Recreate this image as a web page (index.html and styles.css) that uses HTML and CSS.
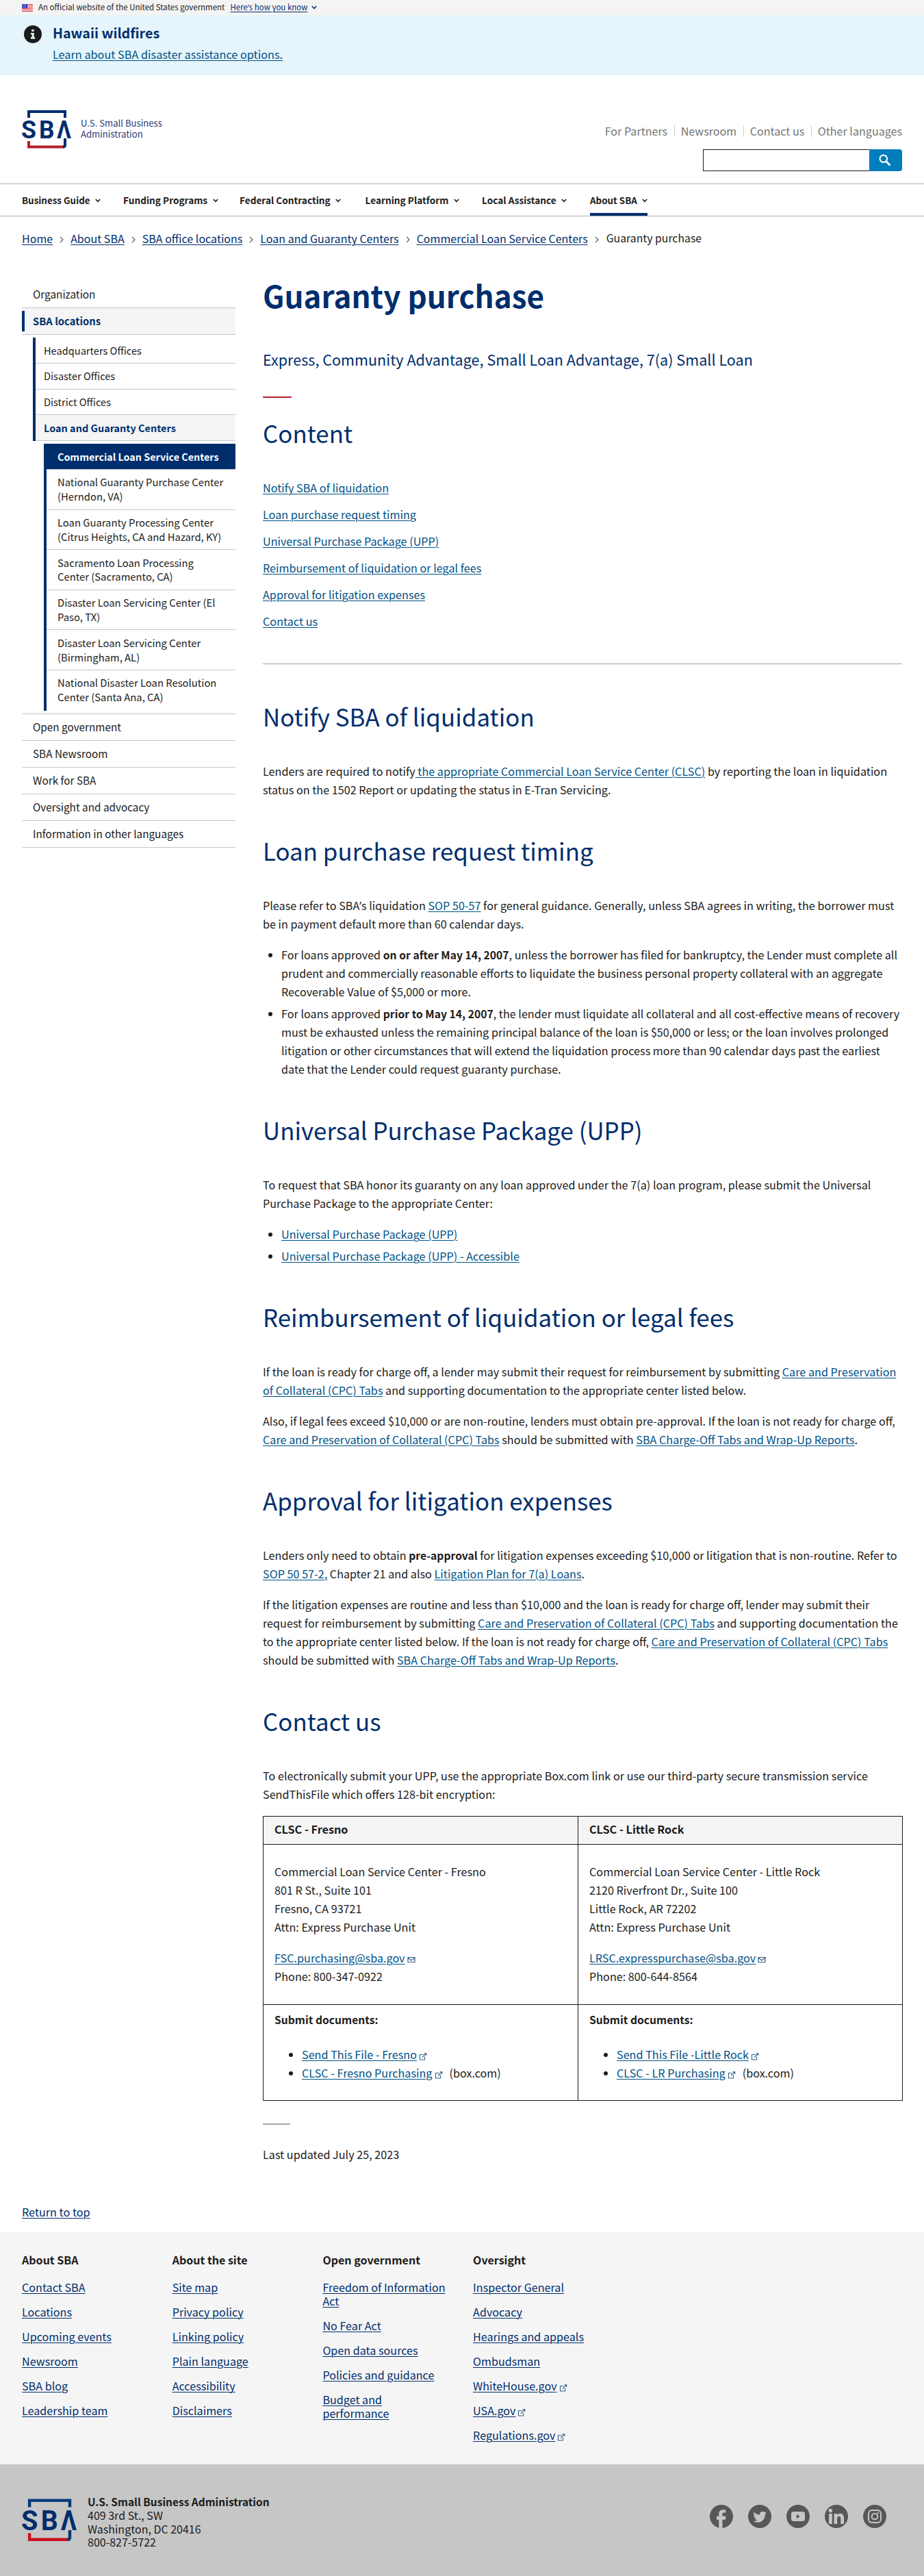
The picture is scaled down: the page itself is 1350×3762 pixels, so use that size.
FILE: index.html
```html
<!DOCTYPE html>
<html lang="en">
<head>
<meta charset="utf-8">
<title>Guaranty purchase</title>
<link rel="stylesheet" href="styles.css">
</head>
<body>
<svg class="defs" aria-hidden="true">
  <symbol id="chev" viewBox="0 0 8 6"><path d="M.8 1L4 4.300 7.200 1" fill="none" stroke="currentColor" stroke-width="1.600"/></symbol>
  <symbol id="sep" viewBox="0 0 6 10"><path d="M1 1l4 4-4 4" fill="none" stroke="#71767a" stroke-width="1.500"/></symbol>
  <symbol id="ext" viewBox="0 0 12 12"><path d="M6.500 3.500H1.500v7.500h7V6.500M5 7.500l5.500-5.500M7.500 1.700h3.300V5" fill="none" stroke="currentColor" stroke-width="1.100"/></symbol>
  <symbol id="mail" viewBox="0 0 12 10"><path d="M1 1.500h10v7H1zM1 2l5 4 5-4" fill="none" stroke="currentColor" stroke-width="1.200"/></symbol>
</svg>

<div class="gov">
  <svg class="flag" viewBox="0 0 16 11"><path fill="#fff" d="M0 0h16v11H0z"/><path stroke="#d8303e" stroke-width="1" d="M0 .5h16M0 2.500h16M0 4.500h16M0 6.500h16M0 8.500h16M0 10.500h16"/><path fill="#2b33b5" d="M0 0h8v6H0z"/><path stroke="#fff" stroke-width=".7" stroke-dasharray="1 1" d="M1 1.500h6M1 3.200h6M1 4.800h6"/></svg>
  <span class="gov-text">An official website of the United States government</span>
  <a href="#">Here<span class="apos">’</span>s how you know</a><svg class="chev"><use href="#chev"/></svg>
</div>
<section class="alert">
  <svg class="info" viewBox="0 0 26 26"><circle cx="13" cy="13" r="13" fill="#1b1b1b"/><path fill="#e7f6f8" d="M11.200 6h3.400v3h-3.400zM10 11h4.700v6.300h1.500v2.500H10v-2.500h1.600v-4H10z"/></svg>
  <div><h3>Hawaii wildfires</h3><a href="#">Learn about SBA disaster assistance options.</a></div>
</section>

<header class="head">
  <div class="brand">
    <svg class="logo" viewBox="0 0 72 56">
      <path d="M10 11V2h53v9" fill="none" stroke="#002e6d" stroke-width="4"/>
      <path d="M10 45v8.500h51" fill="none" stroke="#b5202a" stroke-width="4"/>
      <path d="M63 41v9.500q0 3-3 3" fill="none" stroke="#002e6d" stroke-width="4"/>
      <g class="letters"><text x="-1" y="41.300" textLength="22" lengthAdjust="spacingAndGlyphs">S</text><text x="25" y="41.300" textLength="22.500" lengthAdjust="spacingAndGlyphs">B</text><text x="51" y="41.300" textLength="21" lengthAdjust="spacingAndGlyphs">Λ</text></g>
    </svg>
    <span>U.S. Small Business<br>Administration</span>
  </div>
  <div class="tools">
    <ul class="util"><li>For Partners</li><li>Newsroom</li><li>Contact us</li><li>Other languages</li></ul>
    <form class="search"><input type="text" aria-label="Search"><button type="button" aria-label="Search"><svg viewBox="0 0 18 18"><circle cx="6.800" cy="6.800" r="5.200" fill="none" stroke="#fff" stroke-width="2.200"/><path d="M10.500 10.500l6 6" stroke="#fff" stroke-width="2.600"/></svg></button></form>
  </div>
</header>
<nav class="nav">
  <span>Business Guide<svg class="chev"><use href="#chev"/></svg></span>
  <span>Funding Programs<svg class="chev"><use href="#chev"/></svg></span>
  <span>Federal Contracting<svg class="chev"><use href="#chev"/></svg></span>
  <span>Learning Platform<svg class="chev"><use href="#chev"/></svg></span>
  <span>Local Assistance<svg class="chev"><use href="#chev"/></svg></span>
  <span class="on">About SBA<svg class="chev"><use href="#chev"/></svg></span>
</nav>
<div class="crumbs">
  <a href="#">Home</a><svg><use href="#sep"/></svg><a href="#">About SBA</a><svg><use href="#sep"/></svg><a href="#">SBA office locations</a><svg><use href="#sep"/></svg><a href="#">Loan and Guaranty Centers</a><svg><use href="#sep"/></svg><a href="#">Commercial Loan Service Centers</a><svg><use href="#sep"/></svg><span>Guaranty purchase</span>
</div>

<div class="page">
  <aside>
    <ul class="side">
      <li>Organization</li>
      <li class="cur">SBA locations</li>
      <li class="sub">
        <ul class="l2"><li>Headquarters Offices</li><li>Disaster Offices</li><li>District Offices</li><li class="cur2">Loan and Guaranty Centers</li></ul>
        <ul class="l3">
          <li class="active">Commercial Loan Service Centers</li>
          <li>National Guaranty Purchase Center<br>(Herndon, VA)</li>
          <li>Loan Guaranty Processing Center<br>(Citrus Heights, CA and Hazard, KY)</li>
          <li>Sacramento Loan Processing<br>Center (Sacramento, CA)</li>
          <li>Disaster Loan Servicing Center (El<br>Paso, TX)</li>
          <li>Disaster Loan Servicing Center<br>(Birmingham, AL)</li>
          <li>National Disaster Loan Resolution<br>Center (Santa Ana, CA)</li>
        </ul>
      </li>
      <li>Open government</li><li>SBA Newsroom</li><li>Work for SBA</li><li>Oversight and advocacy</li><li>Information in other languages</li>
    </ul>
  </aside>
  <main>
    <h1>Guaranty purchase</h1>
    <p class="lead">Express, Community Advantage, Small Loan Advantage, 7(a) Small Loan</p>
    <div class="rule"></div>
    <h2 class="toc-title">Content</h2>
    <ul class="toc">
      <li><a href="#">Notify SBA of liquidation</a></li><li><a href="#">Loan purchase request timing</a></li><li><a href="#">Universal Purchase Package (UPP)</a></li><li><a href="#">Reimbursement of liquidation or legal fees</a></li><li><a href="#">Approval for litigation expenses</a></li><li><a href="#">Contact us</a></li>
    </ul>
    <h2>Notify SBA of liquidation</h2>
    <p>Lenders are required to notify<a href="#"> the appropriate Commercial Loan Service Center (CLSC)</a> by reporting the loan in liquidation<br>status on the 1502 Report or updating the status in E-Tran Servicing.</p>
    <h2>Loan purchase request timing</h2>
    <p>Please refer to SBA<span class="apos">’</span>s liquidation <a href="#">SOP 50-57</a> for general guidance. Generally, unless SBA agrees in writing, the borrower must<br>be in payment default more than 60 calendar days.</p>
    <ul class="list">
      <li>For loans approved <strong>on or after May 14, 2007</strong>, unless the borrower has filed for bankruptcy, the Lender must complete all<br>prudent and commercially reasonable efforts to liquidate the business personal property collateral with an aggregate<br>Recoverable Value of $5,000 or more.</li>
      <li>For loans approved <strong>prior to May 14, 2007</strong>, the lender must liquidate all collateral and all cost-effective means of recovery<br>must be exhausted unless the remaining principal balance of the loan is $50,000 or less; or the loan involves prolonged<br>litigation or other circumstances that will extend the liquidation process more than 90 calendar days past the earliest<br>date that the Lender could request guaranty purchase.</li>
    </ul>
    <h2>Universal Purchase Package (UPP)</h2>
    <p>To request that SBA honor its guaranty on any loan approved under the 7(a) loan program, please submit the Universal<br>Purchase Package to the appropriate Center:</p>
    <ul class="list"><li><a href="#">Universal Purchase Package (UPP)</a></li><li><a href="#">Universal Purchase Package (UPP) - Accessible</a></li></ul>
    <h2>Reimbursement of liquidation or legal fees</h2>
    <p>If the loan is ready for charge off, a lender may submit their request for reimbursement by submitting <a href="#">Care and Preservation<br>of Collateral (CPC) Tabs</a> and supporting documentation to the appropriate center listed below.</p>
    <p>Also, if legal fees exceed $10,000 or are non-routine, lenders must obtain pre-approval. If the loan is not ready for charge off,<br><a href="#">Care and Preservation of Collateral (CPC) Tabs</a> should be submitted with <a href="#">SBA Charge-Off Tabs and Wrap-Up Reports</a>.</p>
    <h2>Approval for litigation expenses</h2>
    <p>Lenders only need to obtain <strong>pre-approval</strong> for litigation expenses exceeding $10,000 or litigation that is non-routine. Refer to<br><a href="#">SOP 50 57-2,</a> Chapter 21 and also <a href="#">Litigation Plan for 7(a) Loans</a>.</p>
    <p>If the litigation expenses are routine and less than $10,000 and the loan is ready for charge off, lender may submit their<br>request for reimbursement by submitting <a href="#">Care and Preservation of Collateral (CPC) Tabs</a> and supporting documentation the<br>to the appropriate center listed below. If the loan is not ready for charge off, <a href="#">Care and Preservation of Collateral (CPC) Tabs</a><br>should be submitted with <a href="#">SBA Charge-Off Tabs and Wrap-Up Reports</a>.</p>
    <h2>Contact us</h2>
    <p>To electronically submit your UPP, use the appropriate Box.com link or use our third-party secure transmission service<br>SendThisFile which offers 128-bit encryption:</p>
    <table>
      <colgroup><col class="c1"><col class="c2"></colgroup>
      <tr><th>CLSC - Fresno</th><th>CLSC - Little Rock</th></tr>
      <tr class="addr">
        <td><p>Commercial Loan Service Center - Fresno<br>801 R St., Suite 101<br>Fresno, CA 93721<br>Attn: Express Purchase Unit</p><p><a href="#">FSC.purchasing@sba.gov</a><svg class="ico mail"><use href="#mail"/></svg><br>Phone: 800-347-0922</p></td>
        <td><p>Commercial Loan Service Center - Little Rock<br>2120 Riverfront Dr., Suite 100<br>Little Rock, AR 72202<br>Attn: Express Purchase Unit</p><p><a href="#">LRSC.expresspurchase@sba.gov</a><svg class="ico mail"><use href="#mail"/></svg><br>Phone: 800-644-8564</p></td>
      </tr>
      <tr class="docs">
        <td><strong>Submit documents:</strong><ul><li><a href="#">Send This File - Fresno</a><svg class="ico"><use href="#ext"/></svg></li><li><a href="#">CLSC - Fresno Purchasing</a><svg class="ico"><use href="#ext"/></svg><span class="box">(box.com)</span></li></ul></td>
        <td><strong>Submit documents:</strong><ul><li><a href="#">Send This File -Little Rock</a><svg class="ico"><use href="#ext"/></svg></li><li><a href="#">CLSC - LR Purchasing</a><svg class="ico"><use href="#ext"/></svg><span class="box">(box.com)</span></li></ul></td>
      </tr>
    </table>
    <div class="short"></div>
    <p class="updated">Last updated July 25, 2023</p>
  </main>
</div>
<div class="top"><a href="#">Return to top</a></div>

<footer>
  <div class="links">
    <div><h4>About SBA</h4><a href="#">Contact SBA</a><a href="#">Locations</a><a href="#">Upcoming events</a><a href="#">Newsroom</a><a href="#">SBA blog</a><a href="#">Leadership team</a></div>
    <div><h4>About the site</h4><a href="#">Site map</a><a href="#">Privacy policy</a><a href="#">Linking policy</a><a href="#">Plain language</a><a href="#">Accessibility</a><a href="#">Disclaimers</a></div>
    <div><h4>Open government</h4><a href="#">Freedom of Information<br>Act</a><a href="#">No Fear Act</a><a href="#">Open data sources</a><a href="#">Policies and guidance</a><a href="#">Budget and<br>performance</a></div>
    <div><h4>Oversight</h4><a href="#">Inspector General</a><a href="#">Advocacy</a><a href="#">Hearings and appeals</a><a href="#">Ombudsman</a><a href="#">WhiteHouse.gov<svg class="ico"><use href="#ext"/></svg></a><a href="#">USA.gov<svg class="ico"><use href="#ext"/></svg></a><a href="#">Regulations.gov<svg class="ico"><use href="#ext"/></svg></a></div>
  </div>
  <div class="bottom">
    <svg class="logo2" viewBox="0 0 72 56">
      <path d="M10 11V2h53v9" fill="none" stroke="#003a78" stroke-width="4"/>
      <path d="M10 45v8.500h51" fill="none" stroke="#c8101c" stroke-width="4"/>
      <path d="M63 41v9.500q0 3-3 3" fill="none" stroke="#003a78" stroke-width="4"/>
      <g class="letters"><text x="-1" y="41.300" textLength="22" lengthAdjust="spacingAndGlyphs">S</text><text x="25" y="41.300" textLength="22.500" lengthAdjust="spacingAndGlyphs">B</text><text x="51" y="41.300" textLength="21" lengthAdjust="spacingAndGlyphs">Λ</text></g>
    </svg>
    <address><strong>U.S. Small Business Administration</strong><br>409 3rd St., SW<br>Washington, DC 20416<br>800-827-5722</address>
    <div class="social">
      <svg viewBox="0 0 34 34"><circle cx="17" cy="17" r="17"/><path class="g" d="M13.300 35V21.700H10v-5h3.300v-3.400c0-4 2.200-6 6-6 1.700 0 3 .1 4 .3v4h-2.500c-1.800 0-2.300.8-2.300 2.200v2.900h5l-.7 5h-4.300V35z"/></svg>
      <svg viewBox="0 0 34 34"><circle cx="17" cy="17" r="17"/><path class="g" d="M27 11.500c-.7.300-1.400.5-2.200.6.800-.5 1.400-1.200 1.700-2.100-.8.400-1.600.8-2.500.9a4.100 4.100 0 0 0-6.900 3.700c-3.400-.2-6.400-1.800-8.400-4.200-1.100 1.900-.5 4.200 1.300 5.400-.7 0-1.300-.2-1.900-.5 0 2 1.400 3.600 3.300 4-.6.200-1.200.2-1.800.1.500 1.600 2 2.700 3.800 2.800A8.200 8.200 0 0 1 7.500 24c9 5.200 17.700-1.300 17.500-10.500.8-.5 1.500-1.200 2-2z"/></svg>
      <svg viewBox="0 0 34 34"><circle cx="17" cy="17" r="17"/><rect class="g" x="7" y="10" width="20" height="14" rx="3.500"/><path d="M14.800 13.800l5 3.200-5 3.200z"/></svg>
      <svg viewBox="0 0 34 34"><circle cx="17" cy="17" r="17"/><circle class="g" cx="8.300" cy="8.600" r="2.800"/><path class="g" d="M6 13h4.800v15H6zM13.500 13H18v2.200c2.300-3.800 10-3.400 10 3.600V28h-4.700v-8c0-4.500-5.100-4-5.100 0v8h-4.700z"/></svg>
      <svg viewBox="0 0 34 34"><circle cx="17" cy="17" r="17"/><rect class="l" x="8" y="8" width="18" height="18" rx="5"/><circle class="l" cx="17" cy="17" r="4.300"/><circle class="g" cx="22" cy="12" r="1.200"/></svg>
    </div>
  </div>
</footer>
</body>
</html>
```
FILE: styles.css
```css
* { box-sizing: border-box; }
body { margin: 0; width: 1350px; background: #fff; color: #1b1b1b; font: 16.2px/27px "Noto Sans CJK SC", sans-serif; white-space: nowrap; }
ul, h1, h2, h3, h4, p { margin: 0; padding: 0; }
ul { list-style: none; }
svg { display: block; flex: none; overflow: visible; }
.defs { display: none; }
a { color: #005288; text-decoration: underline; text-decoration-thickness: 1px; text-underline-offset: 2px; }
strong { font-size: .968em; }
.apos { font-family: "Open Sans", sans-serif; line-height: 1; }

.gov { display: flex; align-items: center; height: 22px; padding-left: 32px; background: #f4f4f4; font-size: 11.49px; line-height: 20px; }
.gov a { color: #002e6d; margin-left: 8px; }
.gov > *:not(svg) { margin-bottom: 2px; }
.flag { width: 16px; height: 11px; margin-right: 8px; }
.gov .chev { margin-left: 6px; color: #002e6d; }
.chev { width: 8px; height: 6px; }
.alert { display: flex; height: 88px; padding: 15px 0 0 35px; gap: 16px; background: #e5f5fb; }
.info { width: 26px; height: 26px; }
.alert h3 { margin-top: -4px; color: #002e6d; font-size: 19.72px; line-height: 29px; }
.alert a { display: block; width: max-content; margin-top: 4px; font-size: 16.27px; line-height: 26px; }

.head { display: flex; justify-content: space-between; height: 158px; padding: 51px 32px 0; }
.brand { display: flex; }
.logo { width: 72px; height: 56px; }
.letters { fill: #002e6d; font: 700 36.5px Roboto, sans-serif; }
.brand span { margin: 11px 0 0 14px; color: #283c78; font-size: 13.11px; line-height: 16.3px; }
.tools { display: flex; flex-direction: column; align-items: flex-end; }
.util { display: flex; margin-top: 22px; color: #757575; font-size: 16.1px; line-height: 17px; }
.util li + li { margin-left: 9.5px; padding-left: 9px; border-left: 1px solid #c9c9c9; }
.search { display: flex; margin-top: 18px; }
.search input { width: 243px; height: 32px; margin: 0; border: 1px solid #1b1b1b; border-right: 0; background: #fff; }
.search button { display: grid; place-items: center; width: 48px; height: 32px; padding: 0; border: 0; border-radius: 0 4px 4px 0; background: #007dbc; }
.search svg { width: 18px; height: 18px; margin-left: -2px; }
.nav { display: grid; grid-template-columns: 148px 170px 183.5px 170.5px 158px max-content; height: 48px; padding: 0 32px; border: solid #b0b0b0; border-width: 1px 0; font-size: 13.65px; font-weight: 700; line-height: 46px; }
.nav span { display: flex; align-items: center; }
.nav .chev { margin-left: 7.5px; margin-top: 2px; }
.nav .on { box-shadow: inset 0 -4px #002e6d; font-size: 13.4px; }
.nav span:first-child { font-size: 13.4px; }
.crumbs { display: flex; align-items: center; padding: 20px 32px 0; font-size: 16.05px; line-height: 24px; }
.crumbs a { color: #002e6d; }
.crumbs svg { width: 6px; height: 10px; margin: 4px 10px 0; }
.crumbs span { font-size: 15.8px; margin-left: 1px; }

.page { display: grid; grid-template-columns: 312px 934px; column-gap: 40px; padding: 51px 32px 0; }
.side > li { height: 39px; padding-left: 16px; border-bottom: 1px solid #c4c7ca; font-size: 15.3px; line-height: 37px; }
.side > li.cur { background: linear-gradient(#002e6d, #002e6d) 0 50% / 4px 30px no-repeat #f5f5f5; color: #002e6d; font-size: 14.8px; font-weight: 700; }
.side > li.sub { height: auto; padding: 4px 0 4px 16px; }
.l2, .l3 { border-left: 4px solid #002e6d; font-size: 14.8px; line-height: 20.8px; }
.l2 { font-size: 14.6px; }
.l2 li, .l3 li { padding: 8.5px 0 7.5px 12px; border-bottom: 1px solid #c4c7ca; }
.l2 .cur2 { background: #f5f5f5; color: #002e6d; font-weight: 700; font-size: 14.48px; }
.l3 { margin: 4px 0 0 16px; }
.l3 li { padding-left: 16px; }
.l3 li:last-child { border-bottom-color: #fff; }
.l3 .active { background: #002e6d; color: #fff; font-size: 14.34px; font-weight: 700; }

h1 { color: #002e6d; font-size: 44px; line-height: 60px; margin-top: -10px; }
h2 { margin: 53.2px 0 43.8px; color: #002e6d; font-size: 34.9px; font-weight: 400; line-height: 45px; }
.lead { margin-top: 48px; color: #002e6d; font-size: 21.58px; line-height: 32px; }
.rule { width: 42px; height: 2px; margin-top: 38px; background: #b5202a; }
.toc-title { margin: 29px 0 44px; }
.toc { margin-bottom: 54px; padding-bottom: 48px; border-bottom: 1px solid #a0a0a0; }
.toc li + li { margin-top: 12px; }
p + p { margin-top: 18px; }
.list { margin-top: 18px; padding-left: 27px; list-style: disc; }
.list li + li { margin-top: 5px; }

table { width: 934px; margin-top: 18px; border-collapse: collapse; table-layout: fixed; }
.c1 { width: 460px; }
.c2 { width: 474px; }
th, td { padding: 0 16px; border: 1px solid #1b1b1b; text-align: left; vertical-align: top; }
th { height: 41px; padding-top: 5px; background: #f5f5f5; }
.addr td { height: 234px; padding-top: 26px; }
.docs td { height: 140px; padding-top: 8px; }
.docs ul { margin-top: 24px; padding-left: 40px; list-style: disc; }
.ico { display: inline-block; width: 12px; height: 12px; margin-left: 3px; color: #3b5f86; vertical-align: -2px; }
.mail { height: 10px; vertical-align: -1px; }
.box { margin-left: 10px; }
.short { width: 40px; height: 2px; margin-top: 33px; background: #a9a9a9; }
.updated { margin-top: 30px; }
.top { padding: 57px 32px 16px; line-height: 27px; }
.top a, footer a { color: #002e6d; }

.links { display: flex; height: 339px; padding: 30.5px 32px 0; background: #f5f5f5; }
.links > div { width: 219.7px; }
.links h4 { margin-bottom: 19.5px; font-size: 16.05px; line-height: 20px; }
.links a { display: block; width: max-content; margin-bottom: 16px; font-size: 16.15px; line-height: 20px; }
.bottom { display: flex; height: 163px; padding: 50px 55px 0 32px; background: #c6c6c6; }
.logo2 { width: 80px; height: 63px; }
address { margin: -4.5px 0 0 16px; font-size: 16px; font-style: normal; line-height: 19.7px; }
.social { display: flex; gap: 22px; margin: 9px 0 0 auto; }
.social svg { width: 34px; height: 34px; fill: #575757; overflow: hidden; }
.social .g { fill: #c6c6c6; }
.social .l { fill: none; stroke: #c6c6c6; stroke-width: 2; }
```
